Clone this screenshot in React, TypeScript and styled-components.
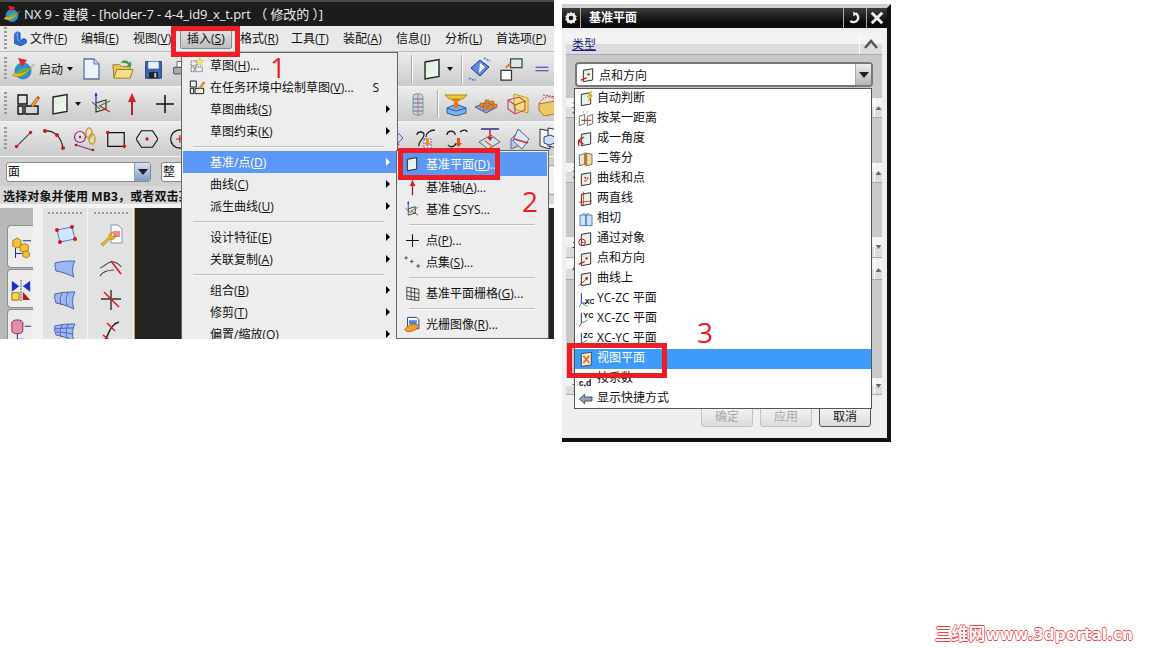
import React from "react";
import styled, { createGlobalStyle, css } from "styled-components";

const Global = createGlobalStyle`
  html, body { margin: 0; padding: 0; background: #fff; }
  body { font-family: "Open Sans", "Noto Sans CJK SC", sans-serif; font-size: 12px; }
  * { box-sizing: border-box; }
`;

const FONT = `"Open Sans", "Noto Sans CJK SC", sans-serif`;

/* ---------- icons ---------- */
const P = "#f4fbf4";
const plane = <path d="M5 5l14-2.5v17L5 22z" fill="url(#pg)" stroke="#222" strokeWidth="1.4" />;
const ICONS: Record<string, React.ReactNode> = {
  globe: <>
    <circle cx="12" cy="14" r="8.5" fill="#2d8fd0" /><path d="M5 16c3-4 8-6 13-5-1 6-6 10-11 9z" fill="#4fb06a" />
    <path d="M1 18c5 4 15 0 22-11-5 7-13 11-19 9z" fill="#f3b81f" stroke="#b8860b" strokeWidth=".5" />
    <path d="M7 1l9 2-5 7z" fill="#e0252b" />
  </>,
  nx: <>
    <path d="M4 4l5-3 4 2v12l6-3 4 2v5l-9 5-10-4z" fill="#2f6fd8" stroke="#123c90" strokeWidth="1" />
    <path d="M9 1v13l4 2M4 4l5 3" fill="none" stroke="#a8c8f5" strokeWidth="1" />
  </>,
  doc: <><path d="M5 2h10l5 5v15H5z" fill="#eef2ff" stroke="#5a6fb5" strokeWidth="1.3" /><path d="M15 2v5h5" fill="#cfd8f5" stroke="#5a6fb5" /></>,
  folder: <>
    <path d="M3 20L2 7h7l2 2h9v11z" fill="#e8c560" stroke="#9a7a20" /><path d="M3 21l3-9h17l-3 9z" fill="#f6de8d" stroke="#9a7a20" />
    <path d="M10 5c3-4 7-3 9 0l2-1v5h-5l2-2c-2-2-5-2-8-2z" fill="#3aa13a" />
  </>,
  floppy: <><path d="M3 3h18v19H3z" fill="#3f63b5" stroke="#1d2f70" /><path d="M6 3h12v8H6z" fill="#e8f0ff" /><path d="M7 15h10v7H7z" fill="#222" /><path d="M13 16h2v5h-2z" fill="#ddd" /></>,
  printer: <><path d="M6 3h10v7H6z" fill="#fff" stroke="#555" /><path d="M2 10h18v8H2z" fill="#aaa" stroke="#444" /></>,
  sketch: <>
    <path d="M2 3h9v9H2zM2 14h5v8H2zM9 14h13v8H9z" fill="none" stroke="#111" strokeWidth="1.4" />
    <path d="M15 13l6-8 2 2-6 8z" fill="#f0a030" stroke="#a05010" strokeWidth=".7" /><path d="M21 5l1-1 2 2-1 1z" fill="#d22" />
  </>,
  plane: <>{plane}</>,
  csys: <>
    <path d="M6 11l10-3v9l-10 3z" fill="none" stroke="#333" strokeWidth="1.2" /><path d="M2 10l8 7" stroke="#333" strokeWidth="1" />
    <path d="M6 1v10" stroke="#1030d0" strokeWidth="1.2" /><path d="M4.5 4L6 .5 7.500 4z" fill="#1030d0" />
    <path d="M9 14l11-5" stroke="#1a9a30" strokeWidth="1.300" /><path d="M10 14l10 6" stroke="#d02020" strokeWidth="1.300" />
  </>,
  up: <><path d="M12 7v16" stroke="#a01818" strokeWidth="1.800" /><path d="M8 10l4-9 4 9z" fill="#d8222a" /></>,
  plus: <path d="M12 3v18M3 12h18" stroke="#111" strokeWidth="1.500" />,
  line: <><path d="M4 20L20 4" stroke="#222" strokeWidth="1.200" /><circle cx="4" cy="20" r="2" fill="#d01818" /><circle cx="20" cy="4" r="2" fill="#d01818" /></>,
  arc: <><path d="M3 4c8-1 16 5 18 17" fill="none" stroke="#222" strokeWidth="1.200" /><circle cx="3" cy="4" r="2" fill="#d01818" /><circle cx="15" cy="8" r="2" fill="#d01818" /><circle cx="21" cy="21" r="2" fill="#d01818" /></>,
  link: <>
    <circle cx="7" cy="10" r="5.500" fill="none" stroke="#8a2aa0" strokeWidth="1.200" /><circle cx="7" cy="10" r="1.200" fill="#d01818" />
    <path d="M3 18l16 5" stroke="#8a2aa0" strokeWidth="1.200" /><circle cx="3" cy="18" r="1.300" fill="#a01818" /><circle cx="20" cy="23" r="1.300" fill="#a01818" />
    <ellipse cx="16" cy="6" rx="3" ry="5" fill="none" stroke="#d0a020" strokeWidth="1.600" /><ellipse cx="19" cy="12" rx="3" ry="5" fill="none" stroke="#d0a020" strokeWidth="1.600" />
  </>,
  rect: <><path d="M3 5h18v15H3z" fill="none" stroke="#111" strokeWidth="1.300" /><circle cx="3" cy="5" r="2" fill="#d01818" /><circle cx="21" cy="20" r="2" fill="#d01818" /></>,
  hex: <><path d="M6 3h12l6 9-6 9H6L0 12z" fill="none" stroke="#111" strokeWidth="1.300" /><circle cx="12" cy="12" r="1.800" fill="#d01818" /></>,
  circle: <><circle cx="14" cy="12" r="10" fill="none" stroke="#111" strokeWidth="1.300" /><path d="M14 8v8M10 12h8" stroke="#d01818" strokeWidth="1.300" /></>,
  rot: <>
    <path d="M12 3l9 7-9 9-9-8z" fill="#5f87e0" stroke="#1c3a90" /><path d="M12 6l5 4-6 6z" fill="#fff" />
    <path d="M16 1l6 3M1 21c3 2 5 2 7 2" stroke="#3b7ad8" strokeWidth="1.500" fill="none" strokeDasharray="2 1" />
  </>,
  pair: <><path d="M11 1h12v9H11z" fill="#d8ece0" stroke="#444" strokeWidth="1.300" /><path d="M1 13h11v10H1z" fill="#fff" stroke="#333" strokeWidth="1.300" /><path d="M6 10l5-4" stroke="#e87020" strokeWidth="2" /></>,
  eq: <path d="M1 9h22M1 15h22" stroke="#1c2ea0" strokeWidth="1.600" />,
  spring: <>
    <rect x="7" y="2" width="10" height="21" rx="3" fill="#c9d3dc" stroke="#8795a5" />
    <path d="M7 7h10M7 11h10M7 15h10M7 19h10" stroke="#68788a" /><path d="M12 1v23" stroke="#d05050" strokeWidth=".7" />
  </>,
  datum: <>
    <path d="M3 16l9-4 10 4v5l-10 3-9-3z" fill="#7fb0ee" stroke="#2a5aa8" /><path d="M3 16l9 3 10-3" fill="none" stroke="#2a5aa8" />
    <path d="M10 9h4v7h-4z" fill="#e87820" /><path d="M7 9l5-5 5 5z" fill="#e87820" /><path d="M1 3h22l-4 4H5z" fill="#f1c740" stroke="#b58a10" />
  </>,
  pegs: <>
    <path d="M1 15l12-5 10 5-11 6z" fill="#88a6d8" stroke="#44649c" />
    {[[6, 11], [11, 8], [16, 9], [9, 14], [14, 13], [19, 12]].map(([x, y]) => <path key={`${x}${y}`} d={`M${x} ${y}h4v4h-4z`} fill="#e88326" stroke="#a85010" strokeWidth=".5" />)}
  </>,
  cubeP: <>
    <path d="M8 2l14 4v15l-14-4z" fill="#f1e078" stroke="#c0a020" /><path d="M2 8l11-3 6 4v9l-10 4-7-5z" fill="none" stroke="#d04060" strokeWidth="1.100" />
    <path d="M9 13l10-4M9 13v9M9 13L2 8" stroke="#d04060" strokeWidth="1.100" />
  </>,
  boxY: <><path d="M2 12l16-3 5 5v7l-16 3-5-6z" fill="#f0c860" stroke="#a87820" /><path d="M2 12c3-8 14-10 16-3M6 3l14 2 3 9" fill="none" stroke="#d04040" strokeDasharray="2 1" /></>,
  wedge: <><path d="M1 12l9-9 8 8-8 8z" fill="#cddcf3" stroke="#4a6cb0" /><path d="M4 8l10 10" stroke="#d03020" strokeWidth="1.500" /></>,
  curveA: <><path d="M3 8c0-4 7-4 7 0s-6 6-5 11M21 3c-5 0-9 3-9 7" fill="none" stroke="#222" strokeWidth="1.300" /><path d="M10 12h7v9h-7z" fill="#eef" stroke="#6050d0" strokeDasharray="2 1" /><path d="M12 11h3v5h2l-3.500 4L10 16h2z" fill="#e89020" /></>,
  curveB: <><path d="M2 8c0-5 9-5 8 0M15 5c3-3 7-2 7 0M3 18c2 3 7 2 8-2" fill="none" stroke="#222" strokeWidth="1.300" /><path d="M12 11h3v5h2l-3.500 4L10 16h2z" fill="#e05010" /></>,
  planeArrow: <><path d="M2 15l12-7 9 7-12 7z" fill="#cfe0ee" stroke="#666" /><path d="M4 2h18" stroke="#1c2ea0" strokeWidth="1.500" /><path d="M13 2v10" stroke="#d02020" strokeWidth="1.500" /><path d="M10 10h6l-3 4z" fill="#d02020" /><path d="M8 14l8 6" stroke="#e86020" strokeWidth="1.500" /></>,
  twoPlanes: <><path d="M3 12l9-9v15l-9 4z" fill="#b8c8e0" stroke="#5a6a90" /><path d="M10 2l11 10-7 10-9-8z" fill="#dce8f8" stroke="#5a6a90" /><path d="M6 12l14 4" stroke="#d03030" strokeWidth="1.500" /></>,
  cubes: <><path d="M1 2l10 2v18l-10-3z" fill="#eef5ee" stroke="#333" /><path d="M9 1l10 2v18l-10-2z" fill="#eef5ee" stroke="#333" /><path d="M5 10l6-2 5 2v6l-6 2-5-2z" fill="#cfdcf5" stroke="#3040a0" /></>,
  star: <>
    <path d="M3 6h8v7H3zM3 15h5v7H3zM10 15h10v7H10z" fill="none" stroke="#555" strokeDasharray="2 1" strokeWidth="1.200" />
    <path d="M16 1l1.500 4 4.500.5-3.500 3 1 4.500-3.500-2.500L12 13l1-4.500-3-3 4.500-.5z" fill="#f4ec70" stroke="#a0a040" strokeWidth=".6" />
  </>,
  grid: <path d="M4 3l17 3v16L4 20zM4 9l17 3M4 15l17 3M10 4v17M15 5v17" fill="none" stroke="#333" strokeWidth="1.200" />,
  points: <path d="M3 3v5M.5 5.500h5M11 8v5M8.500 10.500h5M20 14v6M17 17h6" stroke="#333" strokeWidth="1.100" />,
  raster: <><path d="M5 2h13l3 3v13H5z" fill="#fff" stroke="#2a4ea0" strokeWidth="1.400" /><path d="M7 6h11v6H7z" fill="#4f86d8" /><path d="M1 19c4-7 14-9 20-6-2 6-10 10-17 9z" fill="#f0a020" stroke="#c04010" /></>,
  wrench: <>
    <path d="M12 1h7l4 4v14H12z" fill="#fff" stroke="#8a90b0" /><path d="M14 7h7v6h-7z" fill="#ee8a8a" />
    <path d="M2 20l8-7a4 4 0 0 1 4-5l-2 3 2 2 3-2a4 4 0 0 1-6 4l-7 7z" fill="#ecb820" stroke="#a07810" strokeWidth=".6" />
  </>,
  patch: <><path d="M4 6l15-3 3 12-15 3z" fill="#cfe6ff" stroke="#5a7ac8" /><g fill="#d01818"><circle cx="4" cy="6" r="2" /><circle cx="19" cy="3" r="2" /><circle cx="22" cy="15" r="2" /><circle cx="7" cy="18" r="2" /></g></>,
  patch1: <path d="M2 7c7-2 14-2 20-2-3 5-3 11-1 16-6-3-12-5-18-6-1-3-1-6-1-8z" fill="#9ab7f2" stroke="#4a68b8" />,
  patch3: <path d="M2 6c7-2 14-2 20-2-3 5-3 12-1 17-6-3-12-5-18-6M2 6c-1 3 0 6 1 9M9 5c-2 4-2 8-1 12M15 4c-2 5-2 10-1 14" fill="#9ab7f2" stroke="#4a68b8" />,
  patch4: <path d="M2 6c7-2 14-2 20-2-3 5-3 12-1 17-6-3-12-5-18-6M2 6c-1 3 0 6 1 9M9 5c-2 4-2 8-1 12M15 4c-2 5-2 10-1 14M2 9c7-1 13-1 19-1M3 12c6 0 12 1 17 2" fill="#9ab7f2" stroke="#4a68b8" />,
  trim1: <><path d="M1 12c5-1 8-8 14-6 3 1 6 3 7 5M1 20c3-5 9-6 14-6" fill="none" stroke="#444" strokeWidth="1.200" /><path d="M12 5l10 13" stroke="#e01818" strokeWidth="1.500" /></>,
  trim2: <><path d="M12 2v20M2 11h20" stroke="#333" strokeWidth="1.400" /><path d="M5 4l15 15" stroke="#e01818" strokeWidth="1.500" /></>,
  trim3: <><path d="M2 22c8 0 6-17 18-20" fill="none" stroke="#222" strokeWidth="1.400" /><path d="M4 15l10 8M8 3l8 8" stroke="#e01818" strokeWidth="1.500" /></>,
  asm: <>
    <path d="M3 4l5-3 4 3v6l-4 2-5-2z" fill="#f2c33a" stroke="#a87a10" /><path d="M11 9l5-2 4 2v6l-4 2-5-2z" fill="#f2c33a" stroke="#a87a10" />
    <path d="M6 12v11M6 18h8M14 4h9" stroke="#1c2ea0" strokeWidth="1.100" /><path d="M14 17l4-2 3 2v4l-3 2-4-2z" fill="#f2c33a" stroke="#a87a10" />
  </>,
  mirror: <>
    <path d="M2 2l8 6-8 6zM22 2l-8 6 8 6z" fill="#1c2ec8" /><path d="M12 1v23" stroke="#333" strokeDasharray="2 1" />
    <path d="M2 15h8v8H2z" fill="#f5d840" stroke="#906a10" /><path d="M14 14l8 9h-8z" fill="#c01010" />
  </>,
  db: <>
    <ellipse cx="8" cy="4" rx="6" ry="3" fill="#e48cb0" stroke="#803050" /><path d="M2 4v9c0 4 12 4 12 0V4" fill="#e48cb0" stroke="#803050" />
    <path d="M8 16v7M8 22h8M16 8h7" stroke="#1c2ea0" strokeWidth="1.100" />
  </>,
  auto: <>{plane}<path d="M18 1l-4 8h3l-2 7 7-9h-4l3-6z" fill="#f0d030" stroke="#a08010" strokeWidth=".5" /></>,
  dist: <><path d="M2 8l8-3v14l-8 3zM14 8l8-3v14l-8 3z" fill="#f3f8f3" stroke="#333" /><path d="M5 14h15" stroke="#d01818" strokeWidth="1.500" /><path d="M7 2l2-1M13 2l2-1" stroke="#555" /></>,
  angle: <>{plane}<path d="M1 14l8-5M1 14v8M1 14l7 6" stroke="#d01818" strokeWidth="2" /></>,
  bisect: <><path d="M2 6l8-2v16l-8 2z" fill="#dfeadf" stroke="#333" /><path d="M13 3l8 2v15l-8 2z" fill="#f0e0a0" stroke="#333" /><path d="M11 2v20" stroke="#e07010" strokeWidth="2.500" /></>,
  curvePt: <>{plane}<path d="M9 15c4 0 6-2 6-6" fill="none" stroke="#d01818" strokeWidth="1.300" /><circle cx="11" cy="10" r="1.500" fill="#d01818" /></>,
  twoLines: <>{plane}<path d="M8 1v22M1 17l20-2" stroke="#d01818" strokeWidth="1.200" /></>,
  tangent: <><path d="M3 6h9v16H3zM12 6h9v16h-9z" fill="#cfe0f5" stroke="#3a62a8" strokeWidth="1.200" /><path d="M7 6c0-3 4-3 5 0 1-3 5-3 5 0" fill="none" stroke="#3a62a8" /></>,
  through: <>{plane}<circle cx="6" cy="17" r="5" fill="none" stroke="#d01818" strokeWidth="1.500" /><path d="M6 17h5" stroke="#d01818" /></>,
  ptDir: <>{plane}<circle cx="13" cy="11" r="1.800" fill="#d01818" /><path d="M1 20l9-4" stroke="#d01818" strokeWidth="2" /></>,
  onCurve: <>{plane}<path d="M1 22l13-11" stroke="#d01818" strokeWidth="1.300" /><circle cx="13" cy="11" r="2" fill="#d01818" /></>,
  xc: <><path d="M5 3v15h9" fill="none" stroke="#1c2ec8" strokeWidth="1.500" /><path d="M5 18l-3 6M5 18l9 5" stroke="#1a9a30" strokeWidth="1.300" /><text x="10" y="20" fontSize="11" fontWeight="700" fontFamily="Liberation Sans" fill="#111">XC</text></>,
  yc: <><path d="M5 3v15" fill="none" stroke="#1c2ec8" strokeWidth="1.500" /><path d="M5 18l-3 6" stroke="#d01818" strokeWidth="1.300" /><path d="M5 18l9-4" stroke="#1a9a30" strokeWidth="1.300" /><text x="8" y="10" fontSize="11" fontWeight="700" fontFamily="Liberation Sans" fill="#111">YC</text></>,
  zc: <><path d="M5 3v15" fill="none" stroke="#1c2ec8" strokeWidth="1.500" /><path d="M5 18l9-4M5 18l9 5" stroke="#1a9a30" strokeWidth="1.300" /><text x="8" y="10" fontSize="11" fontWeight="700" fontFamily="Liberation Sans" fill="#111">ZC</text></>,
  view: <><path d="M5 4l15-2v19l-15 2z" fill="#f5e8d0" stroke="#333" strokeWidth="1.200" /><path d="M8 7l9 11M17 7l-9 11" stroke="#e06a20" strokeWidth="2.400" /></>,
  coef: <text x="1" y="22" fontSize="13" fontWeight="700" fontFamily="Liberation Sans" fill="#111">c,d</text>,
  back: <><path d="M10 5L2 12l8 7v-4h11V9H10z" fill="#8fa3b8" stroke="#334" strokeWidth="1.200" /></>,
};

const Defs = () => (
  <svg width="0" height="0" style={{ position: "absolute" }}>
    <defs><linearGradient id="pg" x1="0" y1="0" x2="1" y2="1"><stop offset="0" stopColor="#dcecdc" /><stop offset="1" stopColor={P} /></linearGradient></defs>
  </svg>
);

const Ico = ({ n, s = 24 }: { n: string; s?: number }) => (
  <svg width={s} height={s} viewBox="0 0 24 24" style={{ display: "block", flex: "none" }}>{ICONS[n]}</svg>
);

/* ---------- page ---------- */
const Page = styled.div`
  width: 1152px; height: 648px; background: #fff; overflow: hidden;
  display: flex; flex-direction: column; font-family: ${FONT}; color: #111;
`;
const Shots = styled.div`display: flex; align-items: flex-start; gap: 8px;`;
const Footer = styled.div`margin-top: auto; padding: 0 19px 4px 0; display: flex; justify-content: flex-end;`;
const Watermark = styled.div`
  font: 700 15.4px/18px "DejaVu Sans", "Noto Sans CJK SC", sans-serif; color: #fff; white-space: nowrap;
  text-shadow: .7px 0 #f04444, -.7px 0 #f04444, 0 .7px #f04444, 0 -.7px #f04444;
`;
const WatermarkCjk = styled.span`font-size: 17px; margin-left: -2px;`;

/* ---------- left shot ---------- */
const Shot = styled.div`
  position: relative; width: 554px; height: 339px; overflow: hidden; flex: none;
  display: flex; flex-direction: column; background: #d8d8d8;
`;
const TitleBar = styled.div`
  height: 26px; flex: none; display: flex; align-items: center; gap: 3px; padding: 1px 0 0 3px; color: #eee; font-size: 13px;
  letter-spacing: -.08px; white-space: pre; background: linear-gradient(#4a4a4a 0 2px, #1c1c1c 2px);
`;
const MenuBar = styled.div`
  height: 26px; flex: none; display: flex; align-items: center; background: #e9e9e9; padding-left: 3px; border-bottom: 1px solid #bbb;
`;
const Grip = styled.span`
  width: 3px; height: 24px; flex: none; margin: 0 2px 0 1px;
  background: repeating-linear-gradient(#9a9a9a 0 2px, transparent 2px 4px);
`;
const MenuItem = styled.span<{ $w: number; $on?: boolean }>`
  width: ${p => p.$w}px; flex: none; line-height: 20px; white-space: nowrap; overflow: hidden;
  ${p => p.$on && css`
    height: 21px; margin-right: 8px; padding-left: 6px; border: 1px solid #8a8a8a; border-radius: 2px;
    background: linear-gradient(#e6e6e6, #bdbdbd);
  `}
`;
const ToolRow = styled.div`
  height: 35px; flex: none; display: flex; align-items: center; padding-left: 3px;
  background: linear-gradient(#ececec, #cbcbcb); border-bottom: 1px solid #f4f4f4;
`;
const Tool = styled.span<{ $w: number; $l?: number }>`
  width: ${p => p.$w}px; margin-left: ${p => p.$l ?? 0}px; flex: none; display: flex; align-items: center; justify-content: center;
`;
const Caret = styled.span`
  width: 0; height: 0; flex: none; border: 3px solid transparent; border-top: 4px solid #111; border-bottom: 0; margin: 0 4px;
`;
const Sep = styled.span`
  width: 2px; height: 28px; flex: none; background: linear-gradient(90deg, #aaa 50%, #fff 50%);
`;
const StartLabel = styled.span`font-size: 12px; margin: 0 0 0 4px; white-space: nowrap; flex: none;`;
const FieldRow = styled.div`
  height: 29px; flex: none; display: flex; align-items: center; gap: 10px; padding: 1px 0 0 6px; background: #cfcfcf;
`;
const Field = styled.div<{ $w: number }>`
  width: ${p => p.$w}px; height: 20px; flex: none; display: flex; background: #fff; border: 1px solid #888; border-radius: 3px;
  line-height: 17px; padding-left: 1px; overflow: hidden;
`;
const FieldText = styled.span`flex: 1; white-space: nowrap;`;
const FieldArrow = styled.span`
  width: 16px; flex: none; display: flex; align-items: center; justify-content: center;
  background: linear-gradient(#d6e2f5, #7f9cc8); border-left: 1px solid #8aa;
`;
const Down = styled.span<{ $c?: string }>`
  width: 0; height: 0; border: 5px solid transparent; border-top: 6px solid ${p => p.$c ?? "#222"}; border-bottom: 0;
`;
const StatusRow = styled.div`
  height: 22px; flex: none; padding-left: 3px; font-weight: 700; line-height: 21px; white-space: nowrap; background: #d8d8d8;
  border-bottom: 4px solid #f3f3f3; letter-spacing: .15px;
`;
const Work = styled.div`flex: 1; display: flex; min-height: 0;`;
const Rail = styled.div`
  width: 43px; flex: none; display: flex; flex-direction: column; gap: 1px; padding: 17px 0 0 7px;
  background: linear-gradient(90deg, #b8b8b8 0 33px, #f0f0f0 33px);
`;
const RailTab = styled.div<{ $h: number }>`
  width: 26px; height: ${p => p.$h}px; flex: none; display: flex; align-items: center; justify-content: center;
  background: #ececec; border: 1px solid #8f8f8f; border-right: 0; border-radius: 4px 0 0 4px; padding-top: 3px;
`;
const Palette = styled.div<{ $w: number }>`
  width: ${p => p.$w}px; flex: none; display: flex; flex-direction: column; align-items: center; gap: 8px; padding-top: 4px;
  background: #e2e2e2; border-right: 1px solid #f6f6f6;
`;
const Dots = styled.span`
  width: 34px; height: 2px; margin-bottom: 2px; flex: none;
  background: repeating-linear-gradient(90deg, #999 0 2px, transparent 2px 4px);
`;
const Canvas = styled.div`flex: 1; background: #232323; border-left: 1px solid #e08a30;`;

const Menu = styled.div<{ $l: number; $t: number; $w: number; $h: number }>`
  position: absolute; left: ${p => p.$l}px; top: ${p => p.$t}px; width: ${p => p.$w}px; height: ${p => p.$h}px;
  background: #ededed; border: 1px solid #666; padding: 1px; overflow: hidden; display: flex; flex-direction: column;
`;
const Row = styled.div<{ $on?: boolean; $h?: number }>`
  height: ${p => p.$h ?? 22}px; flex: none; display: flex; align-items: center; white-space: nowrap;
  color: ${p => (p.$on ? "#fff" : "#111")}; background: ${p => (p.$on ? "#5b97f5" : "transparent")};
`;
const Slot = styled.span<{ $w: number }>`
  width: ${p => p.$w}px; flex: none; display: flex; align-items: center; justify-content: center;
`;
const Shortcut = styled.span`margin-left: auto; margin-right: 17px;`;
const Chev = styled.span<{ $on?: boolean; $push?: boolean }>`
  width: 0; height: 0; flex: none; margin-right: 6px; margin-left: ${p => (p.$push ? "auto" : "0")};
  border: 4px solid transparent; border-left: 4px solid ${p => (p.$on ? "#fff" : "#000")}; border-right: 0;
`;
const Rule = styled.div<{ $in: number; $out: number }>`
  height: 9px; flex: none; margin: 0 ${p => p.$out}px 0 ${p => p.$in}px; display: flex; align-items: center;
  &::before { content: ""; flex: 1; height: 2px; background: linear-gradient(#bdbdbd 50%, #fafafa 50%); }
`;
const Corner = styled.div`
  position: absolute; left: 547px; top: 165px; width: 14px; height: 30px; background: #f2f2f2; border: 1px solid #999; border-radius: 5px;
`;
const RedBox = styled.div<{ $l: number; $t: number; $w: number; $h: number }>`
  position: absolute; left: ${p => p.$l}px; top: ${p => p.$t}px; width: ${p => p.$w}px; height: ${p => p.$h}px;
  border: 5px solid #ee1c25; pointer-events: none;
`;
const Num = styled.span<{ $l: number; $t: number }>`
  position: absolute; left: ${p => p.$l}px; top: ${p => p.$t}px; color: #ee1c25; font: 28px/30px "Open Sans", sans-serif;
`;

/* ---------- dialog ---------- */
const Dialog = styled.div`
  position: relative; width: 329px; height: 438px; margin-top: 4px; flex: none; display: flex; flex-direction: column;
  background: #efefef; border-top: 4px solid #cfcfcf; border-right: 4px solid #111; border-bottom: 4px solid #111;
`;
const DlgTitle = styled.div`
  height: 20px; flex: none; display: flex; align-items: center; color: #fff; font-weight: 700;
  background: linear-gradient(#3d3d3d, #0c0c0c 70%);
`;
const TitleCell = styled.span<{ $w: number; $line?: boolean }>`
  width: ${p => p.$w}px; height: 100%; flex: none; display: flex; align-items: center; justify-content: center;
  border-left: ${p => (p.$line ? "1px solid #aaa" : "0")};
`;
const DlgName = styled.span`flex: 1; padding-left: 8px; line-height: 18px;`;
const DlgBody = styled.div`flex: 1; display: flex; flex-direction: column; padding: 5px 5px 0 4px;`;
const GroupHead = styled.div<{ $h: number; $mt?: number }>`
  height: ${p => p.$h}px; margin-top: ${p => p.$mt ?? 0}px; flex: none; display: flex; align-items: center; justify-content: space-between;
  padding-left: 6px; background: linear-gradient(#f3f3f3 50%, #dcdcdc 50%); border-bottom: 1px solid #aaa; color: #1a1a80; white-space: nowrap;
`;
const HeadBtn = styled.span<{ $w: number }>`
  width: ${p => p.$w}px; height: 100%; flex: none; display: flex; align-items: center; justify-content: center; border-left: 1px solid #fff;
`;
const GroupBody = styled.div<{ $h: number }>`
  height: ${p => p.$h}px; flex: none; background: #c9c9c9; padding: 7px 9px 0;
`;
const Combo = styled.div`
  height: 25px; display: flex; align-items: center; gap: 3px; background: #fff; border: 2px solid #777; border-radius: 4px; padding-left: 3px;
`;
const ComboBtn = styled.span`
  width: 16px; height: 100%; margin-left: auto; flex: none; display: flex; align-items: center; justify-content: center;
  background: linear-gradient(#ececec, #b5b5b5); border-left: 1px solid #aaa;
`;
const DlgFooter = styled.div`
  display: flex; justify-content: flex-end; gap: 7px; padding: 11px 11px 0 0;
`;
const Btn = styled.span<{ $off?: boolean }>`
  width: 52px; height: 21px; display: flex; align-items: center; justify-content: center; line-height: 18px; border-radius: 3px;
  border: 1px solid ${p => (p.$off ? "#c2c2c2" : "#555")}; color: ${p => (p.$off ? "#a8a8a8" : "#111")}; background: linear-gradient(#f5f5f5, #dcdcdc);
`;
const List = styled.div`
  position: absolute; left: 12px; top: 80px; width: 298px; height: 321px; background: #fff; border: 1px solid #555; display: flex; flex-direction: column;
`;
const ListRow = styled.div<{ $on?: boolean }>`
  height: 20px; flex: none; display: flex; align-items: center; gap: 3px; padding-left: 3px; white-space: nowrap;
  background: ${p => (p.$on ? "#3f9bfa" : "transparent")}; color: ${p => (p.$on ? "#fff" : "#111")};
`;
const ListText = styled.span`line-height: 16px; padding-bottom: 3px;`;

/* ---------- data ---------- */
const Mn = ({ t }: { t: string }) => {
  const m = t.match(/^(.*\()(.)(\).*)$/);
  return m ? <>{m[1]}<u>{m[2]}</u>{m[3]}</> : <>{t}</>;
};
const MAIN: ({ t: string; i?: string; k?: string; a?: boolean; on?: boolean } | null)[] = [
  { t: "草图(H)...", i: "star" }, { t: "在任务环境中绘制草图(V)...", i: "sketch", k: "S" },
  { t: "草图曲线(S)", a: true }, { t: "草图约束(K)", a: true }, null,
  { t: "基准/点(D)", a: true, on: true }, { t: "曲线(C)", a: true }, { t: "派生曲线(U)", a: true }, null,
  { t: "设计特征(E)", a: true }, { t: "关联复制(A)", a: true }, null,
  { t: "组合(B)", a: true }, { t: "修剪(T)", a: true }, { t: "偏置/缩放(O)", a: true },
];
const SUB: ({ t: React.ReactNode; i: string; on?: boolean; h?: number } | null)[] = [
  { t: <Mn t="基准平面(D)..." />, i: "plane", on: true, h: 24 }, { t: <Mn t="基准轴(A)..." />, i: "up" },
  { t: <>基准 <u>C</u>SYS...</>, i: "csys" }, null, { t: <Mn t="点(P)..." />, i: "plus" }, { t: <Mn t="点集(S)..." />, i: "points" }, null,
  { t: <Mn t="基准平面栅格(G)..." />, i: "grid" }, null, { t: <Mn t="光栅图像(R)..." />, i: "raster" },
];
const LIST: [string, string][] = [
  ["auto", "自动判断"], ["dist", "按某一距离"], ["angle", "成一角度"], ["bisect", "二等分"], ["curvePt", "曲线和点"], ["twoLines", "两直线"],
  ["tangent", "相切"], ["through", "通过对象"], ["ptDir", "点和方向"], ["onCurve", "曲线上"], ["xc", "YC-ZC 平面"], ["yc", "XC-ZC 平面"],
  ["zc", "XC-YC 平面"], ["view", "视图平面"], ["coef", "按系数"], ["back", "显示快捷方式"],
];
const Tri = ({ up, s = 8 }: { up?: boolean; s?: number }) => (
  <svg width={s} height={s} viewBox="0 0 10 10" style={{ display: "block" }}>
    <path d={up ? "M5 2l4 6H1z" : "M5 8L1 2h8z"} fill="#666" />
  </svg>
);

export default function App() {
  return (
    <Page>
      <Global />
      <Defs />
      <Shots>
        <Shot>
          <TitleBar><Ico n="globe" s={18} />NX 9 - 建模 - [holder-7 - 4-4_id9_x_t.prt （ 修改的 ）]</TitleBar>
          <MenuBar>
            <Grip />
            <Tool $w={21}><Ico n="nx" s={15} /></Tool>
            <MenuItem $w={51}><Mn t="文件(F)" /></MenuItem>
            <MenuItem $w={52}><Mn t="编辑(E)" /></MenuItem>
            <MenuItem $w={47}><Mn t="视图(V)" /></MenuItem>
            <MenuItem $w={52} $on><Mn t="插入(S)" /></MenuItem>
            <MenuItem $w={51}><Mn t="格式(R)" /></MenuItem>
            <MenuItem $w={52}><Mn t="工具(T)" /></MenuItem>
            <MenuItem $w={53}><Mn t="装配(A)" /></MenuItem>
            <MenuItem $w={49}><Mn t="信息(I)" /></MenuItem>
            <MenuItem $w={51}><Mn t="分析(L)" /></MenuItem>
            <MenuItem $w={56}><Mn t="首选项(P)" /></MenuItem>
          </MenuBar>
          <ToolRow>
            <Grip />
            <Tool $w={24} $l={2}><Ico n="globe" /></Tool>
            <StartLabel>启动</StartLabel><Caret />
            <Tool $w={20} $l={4}><Ico n="doc" /></Tool>
            <Tool $w={24} $l={9}><Ico n="folder" s={23} /></Tool>
            <Tool $w={20} $l={9}><Ico n="floppy" s={21} /></Tool>
            <Tool $w={20} $l={9}><Ico n="printer" s={20} /></Tool>
            <Tool $w={2} $l={219}><Sep /></Tool>
            <Tool $w={22} $l={8}><Ico n="plane" /></Tool>
            <Caret />
            <Tool $w={2} $l={4}><Sep /></Tool>
            <Tool $w={24} $l={5}><Ico n="rot" /></Tool>
            <Tool $w={24} $l={7}><Ico n="pair" s={23} /></Tool>
            <Tool $w={14} $l={12}><Ico n="eq" s={14} /></Tool>
          </ToolRow>
          <ToolRow>
            <Grip />
            <Tool $w={24} $l={7}><Ico n="sketch" /></Tool>
            <Tool $w={22} $l={9}><Ico n="plane" /></Tool>
            <Caret />
            <Tool $w={24} $l={5}><Ico n="csys" /></Tool>
            <Tool $w={18} $l={9}><Ico n="up" /></Tool>
            <Tool $w={20} $l={14}><Ico n="plus" /></Tool>
            <Tool $w={22} $l={232}><Ico n="spring" /></Tool>
            <Tool $w={2} $l={8}><Sep /></Tool>
            <Tool $w={22} $l={6}><Ico n="datum" /></Tool>
            <Tool $w={24} $l={7}><Ico n="pegs" /></Tool>
            <Tool $w={24} $l={8}><Ico n="cubeP" /></Tool>
            <Tool $w={24} $l={7}><Ico n="boxY" /></Tool>
          </ToolRow>
          <ToolRow>
            <Grip />
            <Tool $w={22} $l={3}><Ico n="line" s={21} /></Tool>
            <Tool $w={24} $l={8}><Ico n="arc" /></Tool>
            <Tool $w={24} $l={7}><Ico n="link" /></Tool>
            <Tool $w={24} $l={7}><Ico n="rect" s={22} /></Tool>
            <Tool $w={24} $l={7}><Ico n="hex" s={22} /></Tool>
            <Tool $w={24} $l={7}><Ico n="circle" s={22} /></Tool>
            <Tool $w={24} $l={195}><Ico n="wedge" /></Tool>
            <Tool $w={24} $l={5}><Ico n="curveA" /></Tool>
            <Tool $w={24} $l={7}><Ico n="curveB" /></Tool>
            <Tool $w={24} $l={8}><Ico n="planeArrow" /></Tool>
            <Tool $w={24} $l={7}><Ico n="twoPlanes" /></Tool>
            <Tool $w={24} $l={7}><Ico n="cubes" /></Tool>
          </ToolRow>
          <FieldRow>
            <Field $w={145}><FieldText>面</FieldText><FieldArrow><Down /></FieldArrow></Field>
            <Field $w={60}><FieldText>整</FieldText></Field>
          </FieldRow>
          <StatusRow>选择对象并使用 MB3，或者双击某一对象</StatusRow>
          <Work>
            <Rail>
              <RailTab $h={43}><Ico n="asm" s={22} /></RailTab>
              <RailTab $h={39}><Ico n="mirror" s={22} /></RailTab>
              <RailTab $h={39}><Ico n="db" s={22} /></RailTab>
            </Rail>
            <Palette $w={45}>
              <Dots />
              <Ico n="patch" /><Ico n="patch1" /><Ico n="patch3" /><Ico n="patch4" />
            </Palette>
            <Palette $w={46}>
              <Dots />
              <Ico n="wrench" /><Ico n="trim1" /><Ico n="trim2" /><Ico n="trim3" />
            </Palette>
            <Canvas />
          </Work>
          <Corner />
          <Menu $l={181} $t={52} $w={217} $h={300}>
            {MAIN.map((m, i) => m ? (
              <Row key={i} $on={m.on}>
                <Slot $w={27}>{m.i && <Ico n={m.i} s={16} />}</Slot>
                <span><Mn t={m.t} /></span>
                {m.k && <Shortcut>{m.k}</Shortcut>}
                {m.a && <Chev $on={m.on} $push />}
              </Row>
            ) : <Rule key={i} $in={10} $out={12} />)}
          </Menu>
          <Menu $l={396} $t={150} $w={153} $h={189}>
            {SUB.map((m, i) => m ? (
              <Row key={i} $on={m.on} $h={m.h}>
                <Slot $w={28}><Ico n={m.i} s={m.on ? 16 : 17} /></Slot>
                <span>{m.t}</span>
              </Row>
            ) : <Rule key={i} $in={11} $out={12} />)}
          </Menu>
          <RedBox $l={171} $t={26} $w={69} $h={31} />
          <RedBox $l={398} $t={148} $w={102} $h={32} />
          <Num $l={270} $t={52}>1</Num>
          <Num $l={522} $t={186}>2</Num>
        </Shot>
        <Dialog>
          <DlgTitle>
            <TitleCell $w={18}>
              <svg width="14" height="14" viewBox="0 0 24 24"><path d="M12 1l2 3 4-1 1 4 3 2-2 3 2 3-3 2-1 4-4-1-2 3-2-3-4 1-1-4-3-2 2-3-2-3 3-2 1-4 4 1z" fill="#eee" /><circle cx="12" cy="12" r="4" fill="#111" /></svg>
            </TitleCell>
            <TitleCell $w={0} $line />
            <DlgName>基准平面</DlgName>
            <TitleCell $w={23} $line>
              <svg width="14" height="14" viewBox="0 0 24 24"><path d="M13 4a8 8 0 1 1-9 13" fill="none" stroke="#eee" strokeWidth="4" /><path d="M9 1v8l7-4z" fill="#eee" /></svg>
            </TitleCell>
            <TitleCell $w={21} $line>
              <svg width="14" height="14" viewBox="0 0 24 24"><path d="M3 3l18 18M21 3L3 21" stroke="#eee" strokeWidth="5" /></svg>
            </TitleCell>
          </DlgTitle>
          <DlgBody>
            <GroupHead $h={22}>
              <u>类型</u>
              <HeadBtn $w={23}>
                <svg width="14" height="10" viewBox="0 0 14 10"><path d="M1 9l6-7 6 7" fill="none" stroke="#555" strokeWidth="2.500" /></svg>
              </HeadBtn>
            </GroupHead>
            <GroupBody $h={43}>
              <Combo>
                <Ico n="ptDir" s={16} />点和方向
                <ComboBtn><Down /></ComboBtn>
              </Combo>
            </GroupBody>
            <GroupHead $h={20}>通过点<HeadBtn $w={8}><Tri up /></HeadBtn></GroupHead>
            <GroupBody $h={45} />
            <GroupHead $h={20}>法向<HeadBtn $w={8}><Tri up /></HeadBtn></GroupHead>
            <GroupBody $h={54} />
            <GroupHead $h={21}>平面方位<HeadBtn $w={8}><Tri /></HeadBtn></GroupHead>
            <GroupHead $h={20} $mt={2}>偏置<HeadBtn $w={8}><Tri up /></HeadBtn></GroupHead>
            <GroupBody $h={98} />
            <GroupHead $h={17}>设置<HeadBtn $w={8}><Tri /></HeadBtn></GroupHead>
            <DlgFooter>
              <Btn $off>确定</Btn>
              <Btn $off>应用</Btn>
              <Btn>取消</Btn>
            </DlgFooter>
          </DlgBody>
          <List>
            {LIST.map(([i, t]) => (
              <ListRow key={t} $on={t === "视图平面"}>
                <Ico n={i} s={16} /><ListText>{t}</ListText>
              </ListRow>
            ))}
          </List>
          <RedBox $l={5} $t={335} $w={100} $h={35} />
          <Num $l={135} $t={309}>3</Num>
        </Dialog>
      </Shots>
      <Footer><Watermark><WatermarkCjk>三维网</WatermarkCjk>www.3dportal.cn</Watermark></Footer>
    </Page>
  );
}
